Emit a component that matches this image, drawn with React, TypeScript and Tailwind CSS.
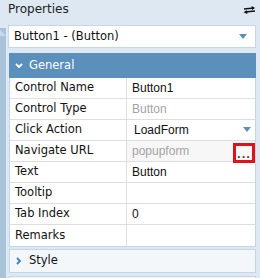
import React from "react";

const labelFont = { fontFamily: '"DejaVu Sans", Verdana, sans-serif' };
const valueFont = { fontFamily: '"Liberation Sans", Arial, sans-serif' };

type Row = { label: string; value?: string; kind?: "text" | "muted" | "select" | "url" };

const rows: Row[] = [
  { label: "Control Name", value: "Button1" },
  { label: "Control Type", value: "Button", kind: "muted" },
  { label: "Click Action", value: "LoadForm", kind: "select" },
  { label: "Navigate URL", value: "popupform", kind: "url" },
  { label: "Text", value: "Button" },
  { label: "Tooltip", value: "" },
  { label: "Tab Index", value: "0" },
  { label: "Remarks", value: "" },
];

function DownTri() {
  return (
    <svg width="8" height="5" viewBox="0 0 8 5">
      <path d="M0 0 L8 0 L4 5 Z" fill="#5d8fbb" />
    </svg>
  );
}

export default function App() {
  return (
    <div className="w-[260px] h-[278px] bg-[#dde8f3] overflow-hidden flex flex-col">
      <div className="h-[25px] shrink-0 flex items-start justify-between pl-[8px] pr-[4px] pt-[1px]">
        <span className="text-[12px] leading-[16px] text-[#222]" style={labelFont}>
          Properties
        </span>
        <svg width="13" height="8" viewBox="0 0 13 8" className="mt-[5px]">
          <path d="M1 3 L11 2" stroke="#111" strokeWidth="1.6" />
          <path d="M12 2 L8.5 0 L9 4 Z" fill="#111" />
          <path d="M2 6 L12 5" stroke="#111" strokeWidth="1.6" />
          <path d="M0.5 6.2 L4 4.2 L4.4 8 Z" fill="#111" />
        </svg>
      </div>
      <div className="flex shrink-0 h-[253px]">
        <div className="w-[6px] shrink-0 mt-[3px] bg-[#a9c3db] relative">
          <svg width="6" height="8" viewBox="0 0 6 8" className="absolute top-[1px] left-0">
            <path d="M0 1 L6 7 L0 7 Z" fill="#c9d9e8" />
          </svg>
        </div>
        <div className="w-[248px] shrink-0 ml-[2px] flex flex-col">
          <div className="h-[23px] shrink-0 bg-white border border-[#c5d6e6] flex items-center justify-between pl-[5px] pr-[8px]">
            <span className="text-[11.5px] text-[#111]" style={labelFont}>
              Button1 - (Button)
            </span>
            <DownTri />
          </div>
          <div className="mt-[5px] shrink-0 ml-[1px] h-[25px] bg-[#5b8fbc] flex items-center pl-[6px] text-white">
            <svg width="8" height="6" viewBox="0 0 8 6" className="mr-[6px]">
              <path d="M1 1 L4 4 L7 1" stroke="#fff" strokeWidth="1.8" fill="none" />
            </svg>
            <span className="text-[11.5px]" style={labelFont}>
              General
            </span>
          </div>
          <div className="ml-[1px] shrink-0 border-l border-r border-b border-[#c3d6e8] bg-white">
            {rows.map((r, i) => (
              <div
                key={r.label}
                className={`h-[21px] flex ${i < rows.length - 1 ? "border-b border-[#dedede]" : ""}`}
              >
                <div
                  className="w-[117px] border-r border-[#dedede] flex items-center pl-[5px] text-[11.5px] text-[#111]"
                  style={labelFont}
                >
                  {r.label}
                </div>
                <div
                  className={`flex-1 relative flex items-center pl-[5px] text-[12px] ${
                    r.kind === "url" ? "bg-[#f7f7f7]" : ""
                  } ${r.kind === "muted" || r.kind === "url" ? "text-[#a3a3a3]" : "text-[#111]"}`}
                  style={valueFont}
                >
                  <span className={r.kind === "select" ? "pl-[2px]" : ""}>{r.value}</span>
                  {r.kind === "select" && (
                    <span className="absolute right-[4px] top-[7px] flex">
                      <DownTri />
                    </span>
                  )}
                  {r.kind === "url" && (
                    <div className="absolute right-0 top-[2px] w-[22px] h-[20px] border-[3px] border-[#e3101c] flex items-center justify-center">
                      <span className="text-[13px] font-bold text-[#5a4a3a] leading-none mt-[1px] tracking-[1px]">
                        ...
                      </span>
                    </div>
                  )}
                </div>
              </div>
            ))}
          </div>
          <div className="mt-[2px] shrink-0 ml-[1px] h-[24px] bg-[#f4f7fa] border border-[#c3d6e8] flex items-center pl-[6px]">
            <svg width="6" height="8" viewBox="0 0 6 8" className="mr-[7px]">
              <path d="M1 1 L4 4 L1 7" stroke="#3d7fbf" strokeWidth="1.8" fill="none" />
            </svg>
            <span className="text-[11.5px] text-[#111]" style={labelFont}>
              Style
            </span>
          </div>
          <div className="mt-[3px] shrink-0 ml-[1px] h-[10px] bg-[#f4f7fa] border-t border-l border-r border-[#c3d6e8]" />
        </div>
      </div>
    </div>
  );
}
